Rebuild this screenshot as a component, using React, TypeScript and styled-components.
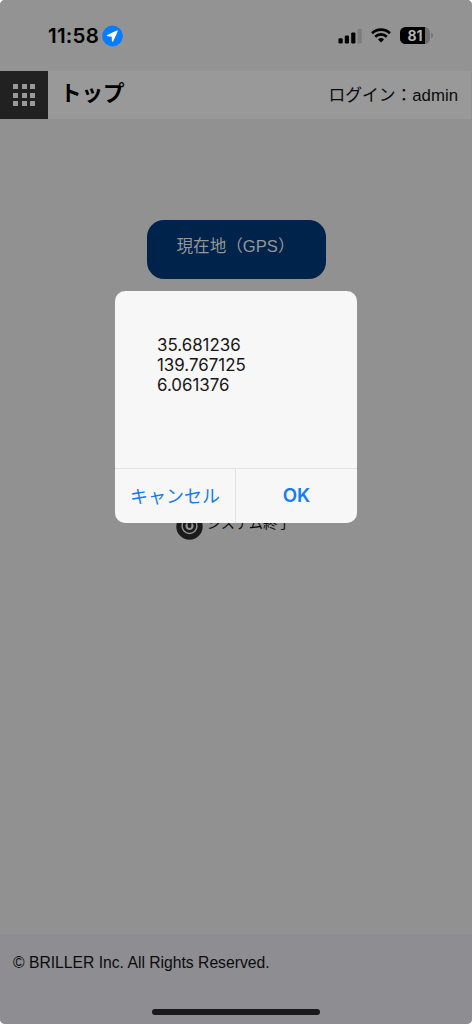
import React from 'react';
import styled, { createGlobalStyle } from 'styled-components';

const GlobalStyle = createGlobalStyle`
  * { box-sizing: border-box; }
  body { margin: 0; background: #fff; }
  button { border: 0; padding: 0; background: none; font: inherit; }
`;

const Screen = styled.div`
  position: relative;
  display: flex;
  flex-direction: column;
  width: 472px;
  height: 1024px;
  overflow: hidden;
  border-radius: 5px;
  background: #919191;
  color: #0b0b0b;
  font-family: 'Liberation Sans', 'Noto Sans CJK JP', sans-serif;
`;

const StatusBar = styled.div`
  display: flex;
  align-items: center;
  height: 71px;
  padding: 0 39px 0 48px;
  background: #939393;
`;

const Clock = styled.span`
  width: 54px;
  font: 600 20.5px/24px Inter, sans-serif;
  letter-spacing: 0.25px;
  color: #000;
`;

const StatusIcons = styled.div`
  display: flex;
  align-items: center;
  gap: 9px;
  margin-left: auto;
`;

const Battery = styled.div`
  display: flex;
  align-items: center;
  gap: 1px;
`;

const BatteryBody = styled.span`
  width: 30px;
  height: 17px;
  border-radius: 5.5px;
  background: linear-gradient(to right, #000 25px, #6f6f6f 25px);
  color: #b4b4b4;
  font: 700 14px/17px Inter, sans-serif;
  text-align: center;
`;

const BatteryTip = styled.span`
  width: 2px;
  height: 5px;
  border-radius: 0 2px 2px 0;
  background: #777;
`;

const Header = styled.header`
  display: flex;
  height: 48px;
  margin-right: 1px;
  background: #999;
`;

const MenuButton = styled.button`
  display: grid;
  grid-template-columns: repeat(3, 5px);
  grid-auto-rows: 5px;
  gap: 3.5px;
  place-content: center;
  width: 48px;
  background: #212121;
`;

const MenuDot = styled.span`
  background: #999;
`;

const Title = styled.h1`
  margin: 0 auto 0 12px;
  font-size: 21.5px;
  line-height: 46px;
  font-weight: 700;
  color: #000;
`;

const LoginUser = styled.span`
  margin-right: 13px;
  font-size: 16.8px;
  line-height: 49px;
  white-space: nowrap;
`;

const Main = styled.main`
  display: flex;
  flex: 1;
  flex-direction: column;
  align-items: center;
  justify-content: space-between;
  padding: 101px 0 395px;
`;

const GpsButton = styled.button`
  width: 179px;
  height: 59px;
  padding: 0 0 9px 30px;
  border-radius: 17px;
  background: #00234b;
  color: #969696;
  font-size: 16.6px;
  text-align: left;
  white-space: nowrap;
`;

const ExitLink = styled.div`
  display: flex;
  align-items: center;
  gap: 4px;
  height: 27px;
  margin: 0 5px -1px 0;
  font-size: 14.2px;
  line-height: 20px;
`;

const ExitLabel = styled.span`
  padding-bottom: 7px;
`;

const Footer = styled.footer`
  display: flex;
  flex-direction: column;
  justify-content: space-between;
  height: 90px;
  padding: 17px 13px 9px;
  background: #8e8d92;
  font-size: 15.7px;
  line-height: 23px;
`;

const HomeIndicator = styled.div`
  align-self: center;
  width: 168px;
  height: 6px;
  border-radius: 3px;
  background: #1a1a1a;
`;

const Dialog = styled.div`
  position: absolute;
  top: 291px;
  left: 115px;
  display: flex;
  flex-direction: column;
  width: 242px;
  height: 232px;
  border-radius: 10px;
  overflow: hidden;
  background: #f7f7f7;
`;

const DialogMessage = styled.div`
  flex: 1;
  padding: 44px 42px 0;
  font: 400 16.9px/20px Inter, sans-serif;
  color: #161616;
`;

const DialogActions = styled.div`
  display: grid;
  grid-template-columns: 120px 1fr;
  height: 55px;
  border-top: 1px solid #e2e2e2;
`;

const DialogButton = styled.button<{ $primary?: boolean }>`
  padding-bottom: 2px;
  color: #147bfb;
  font-family: Inter, 'Noto Sans CJK JP', sans-serif;
  font-size: ${({ $primary }) => ($primary ? '18.7px' : '18px')};
  font-weight: ${({ $primary }) => ($primary ? 600 : 400)};
  border-left: ${({ $primary }) => ($primary ? '1px solid #e2e2e2' : '0')};
`;

const LocationIcon = () => (
  <svg width="21" height="22" viewBox="0 0 21 22">
    <circle cx="10.5" cy="11" r="10.4" fill="#087cff" />
    <path
      d="M15.1 6.2 5.4 10.6l4.9.5.3 4.9z"
      fill="#fff"
      stroke="#fff"
      strokeWidth="1.3"
      strokeLinejoin="round"
    />
  </svg>
);

const SignalIcon = () => (
  <svg width="24" height="16" viewBox="0 0 24 16">
    <rect x="0.5" y="10.3" width="4.2" height="5.2" rx="1.2" />
    <rect x="6.8" y="7.6" width="4.2" height="7.9" rx="1.2" />
    <rect x="13.2" y="4.4" width="4.2" height="11.1" rx="1.2" />
    <rect x="19.5" y="0.8" width="4.2" height="14.7" rx="1.2" fill="#7c7c7c" />
  </svg>
);

const WifiIcon = () => (
  <svg width="20" height="15" viewBox="0 0 20 15" fill="none" stroke="#000" strokeWidth="2.6">
    <path d="M1 5.2a13 13 0 0 1 18 0" />
    <path d="M4.2 8.7a8.4 8.4 0 0 1 11.6 0" />
    <path d="M6.9 11.4a4.6 4.6 0 0 1 6.2 0L10 14.6z" fill="#000" stroke="none" />
  </svg>
);

const PowerIcon = () => (
  <svg width="27" height="27" viewBox="0 0 27 27" fill="none">
    <circle cx="13.5" cy="13.5" r="13.2" fill="#1b1b1b" />
    <circle cx="13.5" cy="13" r="8.2" fill="#919191" />
    <path d="M10.3 8.6a5.4 5.4 0 1 0 6.4 0" stroke="#1b1b1b" strokeWidth="2.6" />
    <path d="M13.5 6.5V13" stroke="#1b1b1b" strokeWidth="3.8" strokeLinecap="round" />
  </svg>
);

export default function App() {
  return (
    <>
      <GlobalStyle />
      <Screen>
        <StatusBar>
          <Clock>11:58</Clock>
          <LocationIcon />
          <StatusIcons>
            <SignalIcon />
            <WifiIcon />
            <Battery>
              <BatteryBody>81</BatteryBody>
              <BatteryTip />
            </Battery>
          </StatusIcons>
        </StatusBar>
        <Header>
          <MenuButton aria-label="メニュー">
            {Array.from({ length: 9 }, (_, i) => (
              <MenuDot key={i} />
            ))}
          </MenuButton>
          <Title>トップ</Title>
          <LoginUser>ログイン：admin</LoginUser>
        </Header>
        <Main>
          <GpsButton>現在地（GPS）</GpsButton>
          <ExitLink>
            <PowerIcon />
            <ExitLabel>システム終了</ExitLabel>
          </ExitLink>
        </Main>
        <Footer>
          <span>© BRILLER Inc. All Rights Reserved.</span>
          <HomeIndicator />
        </Footer>
        <Dialog role="dialog">
          <DialogMessage>
            <div>35.681236</div>
            <div>139.767125</div>
            <div>6.061376</div>
          </DialogMessage>
          <DialogActions>
            <DialogButton>キャンセル</DialogButton>
            <DialogButton $primary>OK</DialogButton>
          </DialogActions>
        </Dialog>
      </Screen>
    </>
  );
}
